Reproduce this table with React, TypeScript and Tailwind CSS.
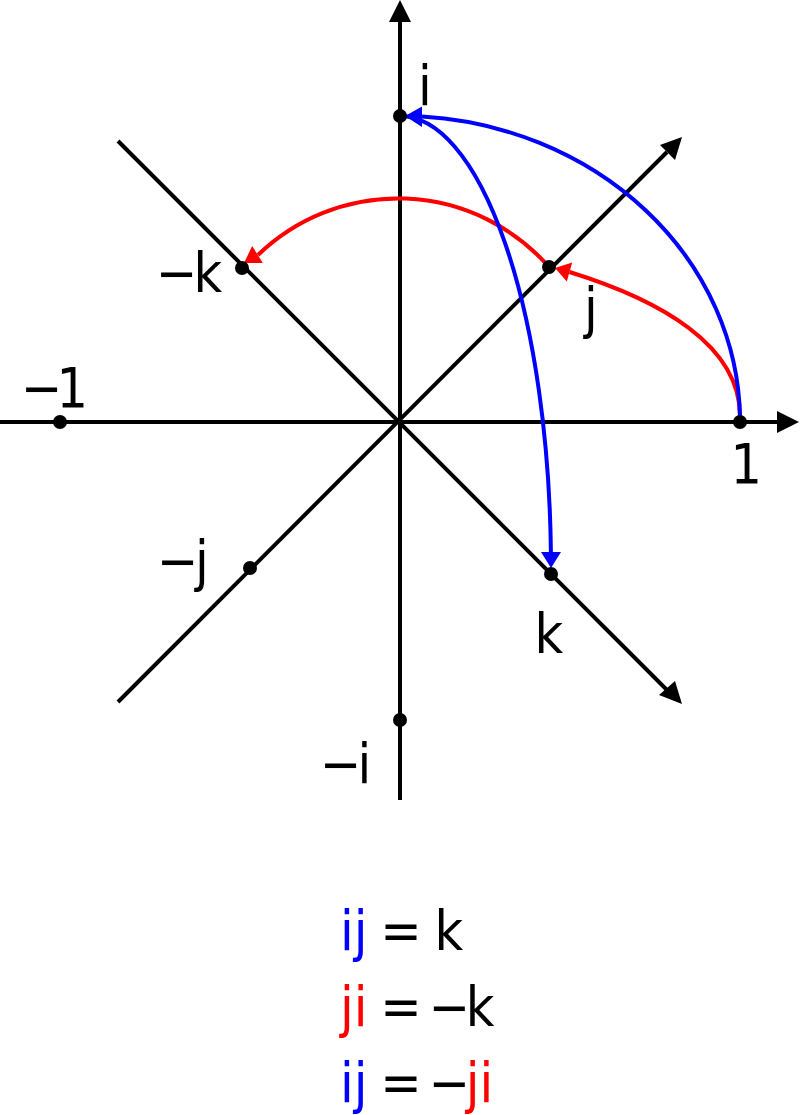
import React from "react";

const font = "'DejaVu Sans Condensed', 'DejaVu Sans', sans-serif";

// ls pulls the letter after the minus sign closer
type Label = { text: string; ls?: number; x: number; y: number };

const labels: Label[] = [
  { text: "i", x: 418, y: 105 },
  { text: "j", x: 584, y: 327 },
  { text: "1", x: 730.5, y: 483 },
  { text: "−k", ls: -4, x: 156, y: 292 },
  { text: "−1", ls: -6, x: 21, y: 407 },
  { text: "−j", ls: -3.5, x: 157, y: 580 },
  { text: "k", x: 534.5, y: 653 },
  { text: "−i", ls: -4, x: 320, y: 783 },
];

const dots: [number, number][] = [
  [400, 116],
  [549, 267],
  [242, 268],
  [60, 422],
  [740, 422],
  [250, 568],
  [551, 574],
  [400, 720],
];

function Minus() {
  return <span className="ml-[7px] tracking-[-4.5px]">−</span>;
}

function Diagram() {
  return (
    <svg width={800} height={800} viewBox="0 0 800 800" className="block">
      {/* axes */}
      <g stroke="#000" strokeWidth={4} fill="none">
        <line x1={0} y1={422} x2={778} y2={422} />
        <line x1={400} y1={800} x2={400} y2={21} />
        <line x1={118} y1={702} x2={667} y2={152} />
        <line x1={118} y1={141} x2={667} y2={690} />
      </g>
      <g fill="#000">
        <polygon points="799,422 777,411 777,433" />
        <polygon points="400,0 389,22 411,22" />
        <polygon points="682,137 660,145 675,160" />
        <polygon points="682,704 659,695 675,681" />
      </g>

      {/* red: ji = -k */}
      <g stroke="#ff0000" strokeWidth={4} fill="none">
        <path d="M 740 416 C 740 345 660 300 569.5 272" />
        <path d="M 549 267 A 201 201 0 0 0 258 255" />
      </g>
      <g fill="#ff0000">
        <polygon points="555,268 572.2,262.4 566.8,281.6" />
        <polygon points="244,263 262.8,263 252.2,246" />
      </g>

      {/* blue: ij = k */}
      <g stroke="#0000ff" strokeWidth={4} fill="none">
        <path d="M 740 416 A 340 306 0 0 0 422 116.6" />
        <path d="M 400 116 A 151 451 0 0 1 550.9 552" />
      </g>
      <g fill="#0000ff">
        <polygon points="405,116 422,106.5 422,127" />
        <polygon points="551,568 541,552 561,552" />
      </g>

      <g fill="#000">
        {dots.map(([cx, cy]) => (
          <circle key={`${cx}-${cy}`} cx={cx} cy={cy} r={7} />
        ))}
      </g>

      <g fill="#000" fontSize={55} style={{ fontFamily: font, fontStretch: "condensed" }}>
        {labels.map((l) => (
          <text key={`${l.x}-${l.y}`} x={l.x} y={l.y} style={l.ls ? { letterSpacing: `${l.ls}px` } : undefined}>
            {l.text}
          </text>
        ))}
      </g>
    </svg>
  );
}

export default function App() {
  return (
    <div className="h-[1115px] w-[800px] overflow-hidden bg-white">
      <Diagram />
      <div className="pt-[93px] pl-[340px] font-['DejaVu_Sans_Condensed','DejaVu_Sans',sans-serif] font-stretch-condensed text-[55px] leading-[76px] [word-spacing:-3px] text-black">
        <p>
          <span className="text-[#0000ff]">ij</span> = k
        </p>
        <p>
          <span className="text-[#ff0000]">ji</span> =<Minus />k
        </p>
        <p>
          <span className="text-[#0000ff]">ij</span> =<Minus />
          <span className="text-[#ff0000]">ji</span>
        </p>
      </div>
    </div>
  );
}
